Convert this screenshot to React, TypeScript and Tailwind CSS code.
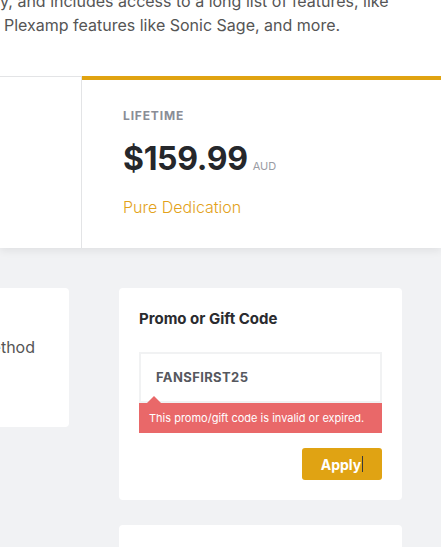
import React from "react";

const font = { fontFamily: "Inter, 'Noto Sans', sans-serif" };

export default function App() {
    return (
        <div className="w-[441px] h-[547px] overflow-hidden bg-[#f1f2f4]" style={font}>
            {/* Plan header + pricing cards */}
            <div className="relative z-10 h-[248px] flex flex-col bg-white shadow-[0_3px_8px_rgba(0,0,0,0.07)]">
                <div className="mt-[-11px] text-[16px] leading-[24px] text-[#555] whitespace-nowrap">
                    <p>y, and includes access to a long list of features, like</p>
                    <p className="pl-[4px]">Plexamp features like Sonic Sage, and more.</p>
                </div>

                <div className="mt-[39px] flex h-[172px]">
                    {/* Other plan (cut off) */}
                    <div className="w-[82px] shrink-0 border-t border-r border-[#e3e4e6]" />

                    {/* Selected plan */}
                    <div className="flex-1 border-t-4 border-[#e0a311] pl-[41px] pt-[27px]">
                        <p className="text-[12px] font-bold tracking-[0.07em] text-[#8a8d96] uppercase">Lifetime</p>
                        <div className="mt-[14px] flex items-baseline gap-[5px]">
                            <span className="text-[32px] font-bold leading-[40px] tracking-[-0.01em] text-[#25272b]">$159.99</span>
                            <span className="text-[11px] text-[#9a9ca4]">AUD</span>
                        </div>
                        <p className="mt-[16px] text-[16px] font-light text-[#e3a21a]">Pure Dedication</p>
                    </div>
                </div>
            </div>

            {/* Checkout cards */}
            <div className="flex gap-[50px] pt-[40px] ml-[-181px]">
                <div className="w-[250px] h-[139px] shrink-0 rounded-[4px] bg-white flex justify-end pr-[34px] pt-[47px]">
                    <p className="text-[16px] leading-[24px] text-[#555] whitespace-nowrap">Add Payment Method</p>
                </div>

                <div className="flex flex-col gap-[25px]">
                    <div className="w-[283px] rounded-[4px] bg-white px-[20px] pt-[21px] pb-[20px]">
                        <h3 className="text-[15px] font-bold leading-[20px] text-[#2a2b2f]">Promo or Gift Code</h3>

                        <div className="mt-[23px] h-[51px] border-2 border-[#f1f2f3] flex items-center pl-[15px]">
                            <span className="text-[13px] font-bold tracking-[0.03em] text-[#56585e]">FANSFIRST25</span>
                        </div>
                        <div className="relative h-[30px] bg-[#e96869] flex items-center pl-[10px]">
                            <span className="absolute left-[8px] top-[-7px] w-0 h-0 border-x-[7px] border-x-transparent border-b-[7px] border-b-[#e96869]" />
                            <span className="text-[11px] text-white">This promo/gift code is invalid or expired.</span>
                        </div>

                        <div className="mt-[15px] flex justify-end">
                            <button className="w-[80px] h-[32px] rounded-[3px] bg-[#e0a313] text-[14px] font-bold text-white flex items-center justify-center">
                                Apply<span className="ml-[1px] inline-block w-px h-[16px] bg-[#3a3a3a]" />
                            </button>
                        </div>
                    </div>

                    <div className="w-[283px] h-[60px] rounded-[4px] bg-white" />
                </div>
            </div>
        </div>
    );
}
